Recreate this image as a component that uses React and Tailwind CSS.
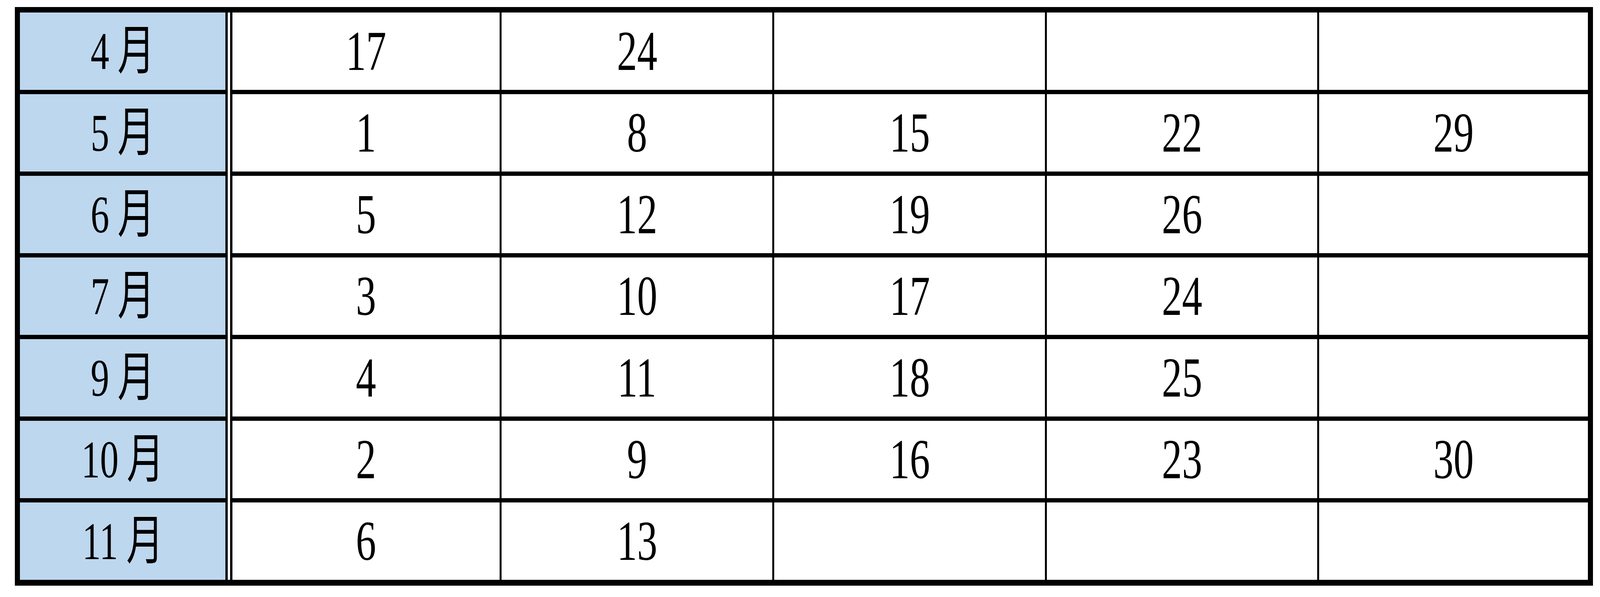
import React from "react";

const rows = [
  ["4", ["17", "24", "", "", ""]],
  ["5", ["1", "8", "15", "22", "29"]],
  ["6", ["5", "12", "19", "26", ""]],
  ["7", ["3", "10", "17", "24", ""]],
  ["9", ["4", "11", "18", "25", ""]],
  ["10", ["2", "9", "16", "23", "30"]],
  ["11", ["6", "13", "", "", ""]],
];

const font = { fontFamily: '"Liberation Serif", "Noto Sans CJK JP", serif' };

export default function App() {
  return (
    <div className="w-full h-[1528px] bg-white pt-[18px] pl-[38px]" style={font}>
      <div className="w-[4040px] flex bg-black border-black border-t-[14px] border-l-[13px] border-r-[13px] border-b-[15px]">
        <div className="w-[526px] flex flex-col gap-[11px]">
          {rows.map(([m]) => (
            <div key={m} className="h-[198px] bg-[#BDD7EE] flex items-center justify-center text-black">
              <span className="inline-block text-[136px] leading-none scale-x-[0.7] whitespace-nowrap">
                {m}
                <span className="ml-[30px]">月</span>
              </span>
            </div>
          ))}
        </div>
        <div className="w-[18px] border-x-[6px] border-black bg-white" />
        <div className="flex-1 grid grid-cols-[684px_693px_693px_692px_688px] grid-rows-[repeat(7,198px)] gap-x-[5px] gap-y-[11px]">
          {rows.map(([m, vals]) =>
            vals.map((v, i) => (
              <div key={m + i} className="bg-white flex items-center justify-center text-black">
                <span className="inline-block text-[144px] leading-none scale-x-[0.72]">{v}</span>
              </div>
            ))
          )}
        </div>
      </div>
    </div>
  );
}
